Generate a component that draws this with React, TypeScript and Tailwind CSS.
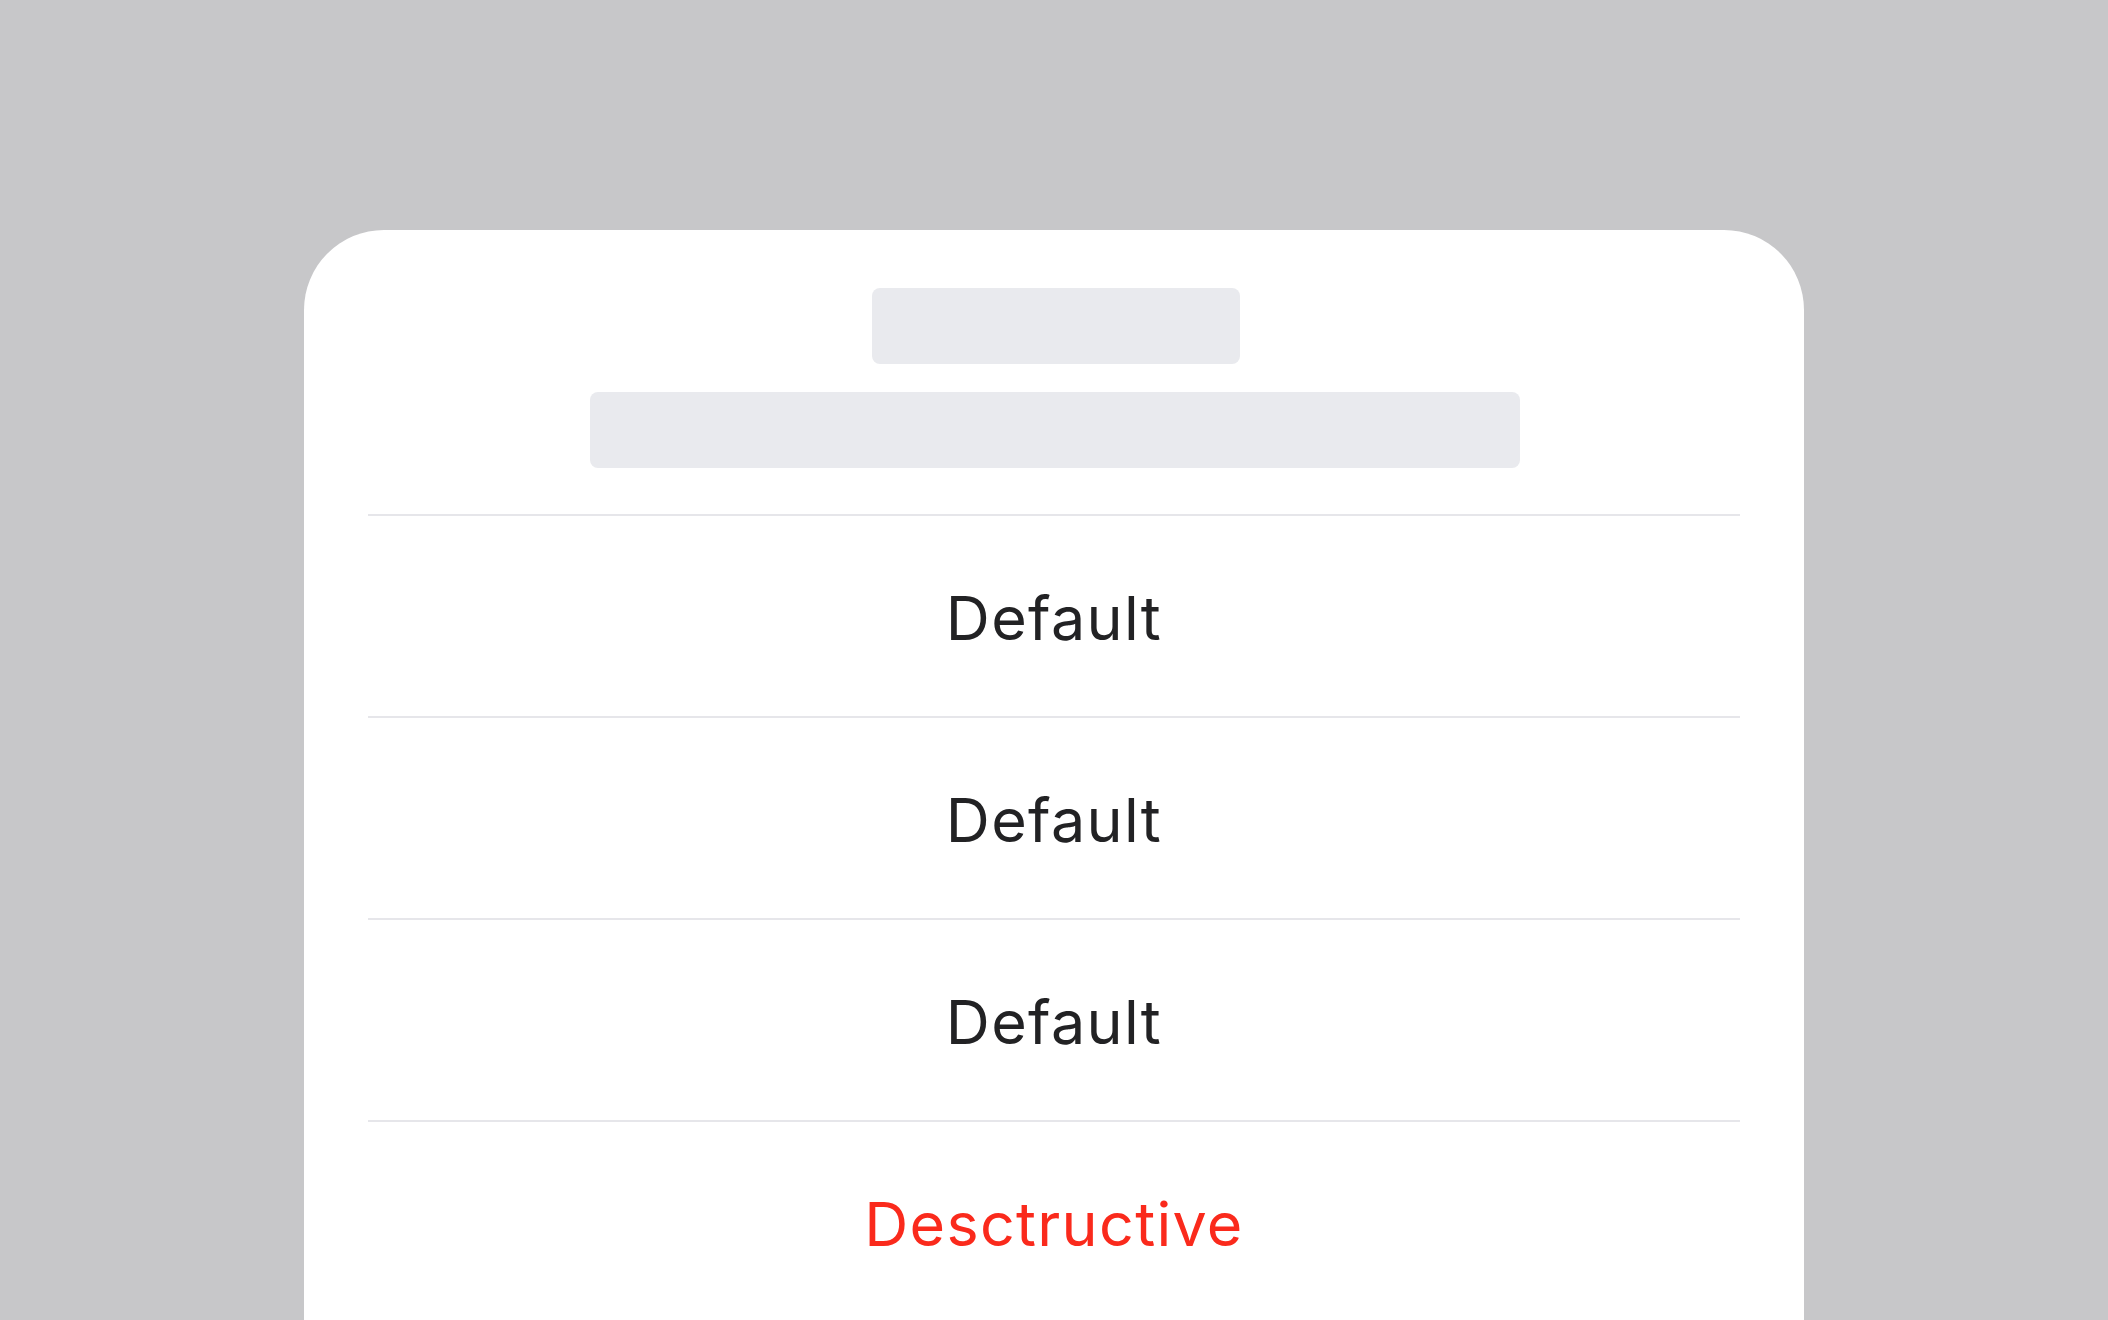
import React from 'react';

// iOS-style action sheet, shown with a loading skeleton header
const actions = [
    { label: 'Default', destructive: false },
    { label: 'Default', destructive: false },
    { label: 'Default', destructive: false },
    { label: 'Desctructive', destructive: true },
];

export default function App() {
    return (
        <div
            className="h-[1320px] w-full overflow-hidden bg-[#c7c7c9] pt-[230px]"
            style={{ fontFamily: 'Inter, "Noto Sans", sans-serif' }}
        >
            <div className="mx-auto h-[1090px] w-[1500px] rounded-t-[80px] bg-white px-16">
                {/* Skeleton title + message */}
                <div className="flex flex-col items-center gap-[28px] pt-[58px] pb-[46px]">
                    <div className="ml-[3px] h-[76px] w-[368px] rounded-[8px] bg-[#e9eaee]" />
                    <div className="ml-[1px] h-[76px] w-[930px] rounded-[8px] bg-[#e9eaee]" />
                </div>

                {/* Actions */}
                <ul>
                    {actions.map((action, i) => (
                        <li
                            key={i}
                            className="flex h-[202px] items-center justify-center border-t-2 border-[#e6e6ea] pt-[5px]"
                        >
                            <span
                                className={
                                    action.destructive
                                        ? 'text-[61px] leading-none tracking-[1.3px] text-[#fa2a1c]'
                                        : 'text-[61px] leading-none tracking-[1.3px] text-[#222224]'
                                }
                            >
                                {action.label}
                            </span>
                        </li>
                    ))}
                </ul>
            </div>
        </div>
    );
}
